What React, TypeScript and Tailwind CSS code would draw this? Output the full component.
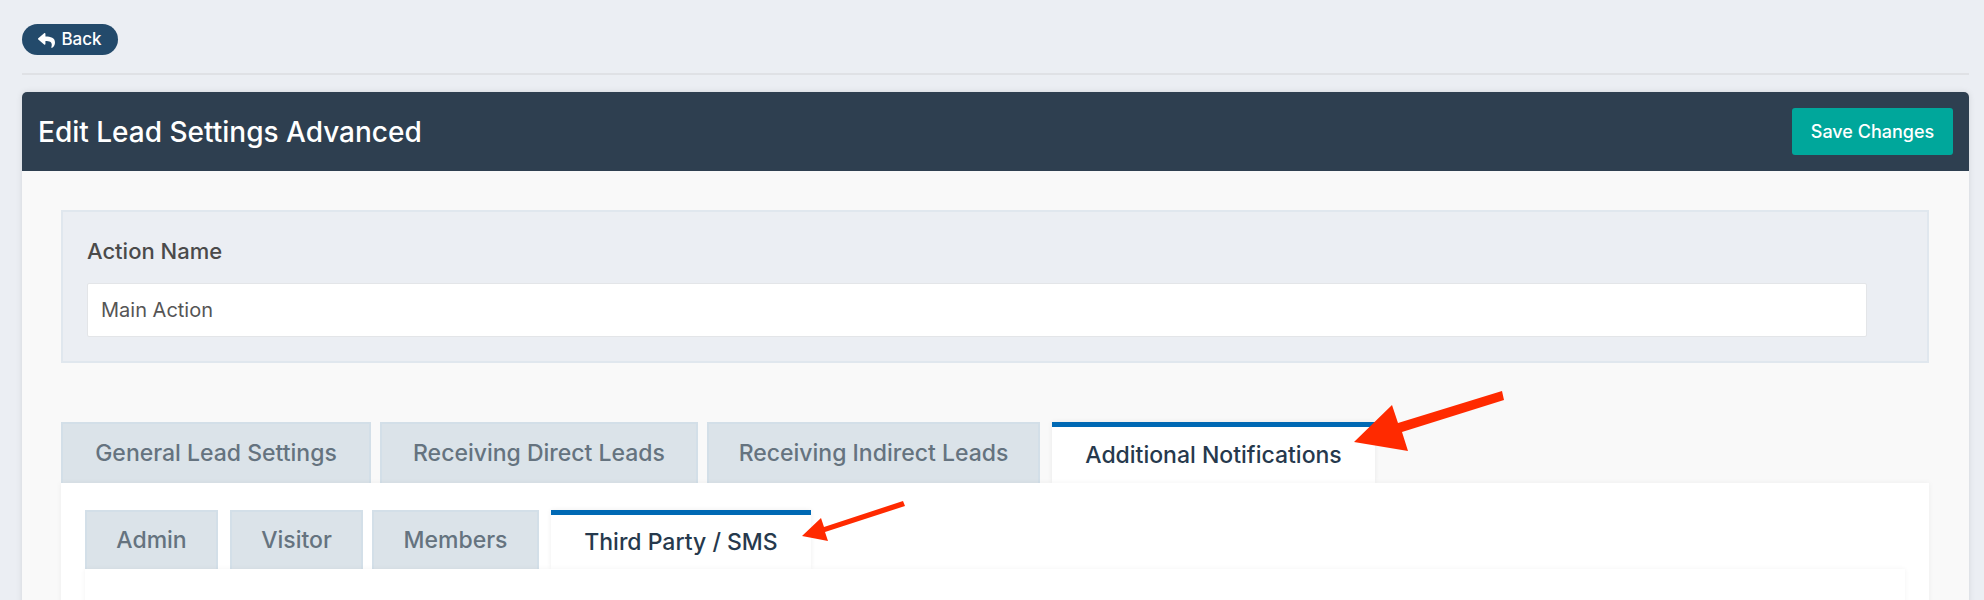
import * as React from "react";
import { FaReply } from "react-icons/fa";

const mainTabs = [
  { label: "General Lead Settings", width: "w-[310px]" },
  { label: "Receiving Direct Leads", width: "w-[318px] ml-[9px]" },
  { label: "Receiving Indirect Leads", width: "w-[333px] ml-[9px]" },
  { label: "Additional Notifications", width: "w-[323px] ml-[12px]", active: true },
];

const subTabs = [
  { label: "Admin", width: "w-[133px]" },
  { label: "Visitor", width: "w-[133px] ml-[12px]" },
  { label: "Members", width: "w-[167px] ml-[9px]" },
  { label: "Third Party / SMS", width: "w-[260px] ml-[12px]", active: true },
];

function Tab({ label, width, active, height }: { label: string; width: string; active?: boolean; height: string }) {
  if (active) {
    return (
      <div className={`${width} ${height} flex items-center justify-center border-t-[5px] border-[#0069b4] bg-white text-[#26394d] shadow-[0_0_5px_rgba(0,0,0,0.07)]`}>
        {label}
      </div>
    );
  }
  return (
    <div className={`${width} ${height} flex items-center justify-center border-2 border-b-0 border-[#d3dfe8] bg-[#dbe3e9] text-[#65737f]`}>
      {label}
    </div>
  );
}

export default function App() {
  return (
    <div className="relative h-[600px] w-[1984px] overflow-hidden bg-[#ebeef3] pl-[22px] pr-[15px] pt-6 font-['Inter',sans-serif]">
      {/* Back */}
      <button className="flex h-[31px] w-[96px] items-center justify-center gap-[6px] rounded-full bg-[#234a6b] pt-px text-[17px] font-medium text-white">
        <FaReply size={17} />
        Back
      </button>

      <div className="mt-[18px] h-0.5 bg-[#dfe1e5]" />

      <div className="mt-[17px] rounded-t-[5px] bg-[#f9f9f9] shadow-[0_0_6px_rgba(0,0,0,0.1)]">
        {/* Header */}
        <div className="flex h-[79px] items-center justify-between rounded-t-[5px] bg-[#2e3f50] pl-4 pr-4">
          <h1 className="text-[28px] font-medium text-white">Edit Lead Settings Advanced</h1>
          <button className="h-[47px] w-[161px] rounded-[3px] bg-[#00a79b] text-[18px] font-medium text-white">Save Changes</button>
        </div>

        <div className="pl-[39px] pr-10 pt-[39px]">
          {/* Action name */}
          <div className="h-[153px] border-2 border-[#e0e7ee] bg-[#ebeef3] pl-6 pr-[60px] pt-[26px]">
            <label className="block text-[22px] font-medium leading-[26px] text-[#4a4a4a]">Action Name</label>
            <input
              readOnly
              value="Main Action"
              className="mt-[19px] block h-[54px] w-full rounded-[2px] border border-[#e3e5e8] bg-white px-[13px] text-[20px] text-[#555555] outline-none"
            />
          </div>

          {/* Main tabs */}
          <div className="mt-[59px] flex text-[23px] font-medium">
            {mainTabs.map((t) => (
              <Tab key={t.label} label={t.label} width={t.width} active={t.active} height="h-[61px]" />
            ))}
          </div>

          <div className="relative bg-white px-6 pt-[27px] shadow-[0_0_6px_rgba(0,0,0,0.05)]">
            {/* Sub tabs */}
            <div className="flex text-[23px] font-medium">
              {subTabs.map((t) => (
                <Tab key={t.label} label={t.label} width={t.width} active={t.active} height="h-[59px]" />
              ))}
            </div>
            <div className="relative h-[60px] bg-white shadow-[0_0_5px_rgba(0,0,0,0.05)]" />
          </div>
        </div>
      </div>

      {/* Annotation arrows */}
      <svg className="absolute left-0 top-0" width="1984" height="600" viewBox="0 0 1984 600" fill="#ff2a00">
        <path d="M1502 391 L1504 400 L1402 432 L1408 451 L1354 442 L1392 405 L1398 423 Z" />
        <path d="M903 501 L905 506 L825 532 L828 541 L802 536 L821 518 L824 527 Z" />
      </svg>
    </div>
  );
}
